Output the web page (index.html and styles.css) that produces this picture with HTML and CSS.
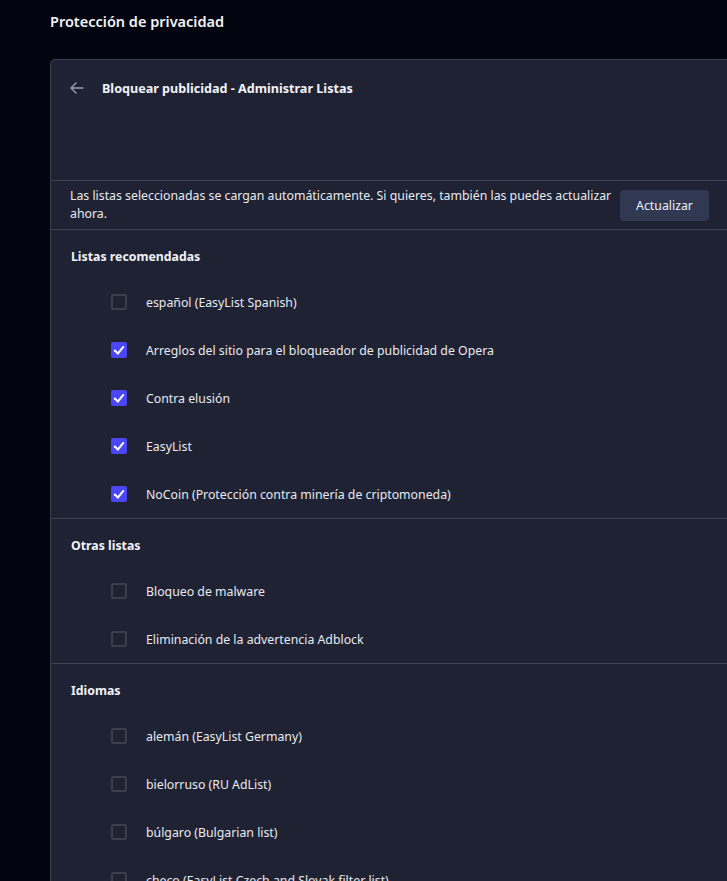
FILE: index.html
```html
<!DOCTYPE html>
<html>
<head>
  <meta name="viewport" content="width=device-width, initial-scale=1.0">
  <link rel="stylesheet" href="styles.css">
</head>
<body>

<h1 class="page_title">Protección de privacidad</h1>

<div class="card">

  <div class="card_header">
    <span class="back_btn">
      <svg width="16" height="16" viewBox="0 0 16 16">
        <path d="M14.5 8H2 M7.5 2.5L2 8l5.5 5.5" fill="none" stroke="currentColor" stroke-width="1.3"/>
      </svg>
    </span>
    <span class="card_title">Bloquear publicidad - Administrar Listas</span>
  </div>

  <div class="info_row">
    <div class="info_text">Las listas seleccionadas se cargan automáticamente. Si quieres, también las puedes actualizar ahora.</div>
    <div class="update_btn">Actualizar</div>
  </div>

  <div class="section">
    <div class="section_title">Listas recomendadas</div>
    <div class="list_row"><span class="check"></span>español (EasyList Spanish)</div>
    <div class="list_row"><span class="check checked"></span>Arreglos del sitio para el bloqueador de publicidad de Opera</div>
    <div class="list_row"><span class="check checked"></span>Contra elusión</div>
    <div class="list_row"><span class="check checked"></span>EasyList</div>
    <div class="list_row"><span class="check checked"></span>NoCoin (Protección contra minería de criptomoneda)</div>
  </div>

  <div class="section">
    <div class="section_title">Otras listas</div>
    <div class="list_row"><span class="check"></span>Bloqueo de malware</div>
    <div class="list_row"><span class="check"></span>Eliminación de la advertencia Adblock</div>
  </div>

  <div class="section">
    <div class="section_title">Idiomas</div>
    <div class="list_row"><span class="check"></span>alemán (EasyList Germany)</div>
    <div class="list_row"><span class="check"></span>bielorruso (RU AdList)</div>
    <div class="list_row"><span class="check"></span>búlgaro (Bulgarian list)</div>
    <div class="list_row"><span class="check"></span>checo (EasyList Czech and Slovak filter list)</div>
  </div>

</div>

</body>
</html>
```

FILE: styles.css
```css
html {
  height: 100%;
}

body {
  margin: 0;
  padding: 0 0 0 50px;
  background-color: #02040f;
  color: #e8eaf0;
  font-family: "Noto Sans", "Open Sans", sans-serif;
  font-size: 12.3px;
  overflow: hidden;
}

.page_title {
  margin: 0;
  padding: 12px 0 0 0;
  height: 47px;
  font-size: 14.5px;
  line-height: 18px;
  font-weight: 600;
  color: #f2f3f7;
}

.card {
  width: 680px;
  background-color: #1f2233;
  border: 1px solid #3b3e4c;
  border-radius: 5px;
}

.card_header {
  display: flex;
  align-items: center;
  height: 56px;
  padding: 0 20px 64px 18px;
  gap: 17px;
}

.back_btn {
  display: flex;
  color: #9a9daa;
}

.card_title {
  font-weight: 700;
  font-size: 12.6px;
  color: #f2f3f7;
}

.info_row {
  display: flex;
  align-items: center;
  gap: 6px;
  height: 48px;
  padding: 0 22px 0 19px;
  border-top: 1px solid #3f4250;
  border-bottom: 1px solid #3f4250;
  line-height: 18px;
}

.info_text {
  flex: 1;
}

.update_btn {
  width: 89px;
  height: 31px;
  line-height: 31px;
  text-align: center;
  border-radius: 4px;
  background-color: #313852;
  color: #eef0f5;
  flex-shrink: 0;
}

.section {
  border-bottom: 1px solid #3f4250;
}

.section_title {
  padding: 18px 0 12px 20px;
  line-height: 18px;
  font-weight: 700;
  color: #f2f3f7;
}

.list_row {
  display: flex;
  align-items: center;
  height: 48px;
  padding-left: 60px;
  gap: 19px;
}

.check {
  box-sizing: border-box;
  width: 16px;
  height: 16px;
  border: 2px solid #3c3f4b;
  border-radius: 2px;
  flex-shrink: 0;
  position: relative;
}

.checked {
  border: none;
  background-color: #4a45f5;
}

/* white tick inside the ticked boxes */
.checked::after {
  content: "";
  position: absolute;
  left: 5px;
  top: 2px;
  width: 4px;
  height: 8px;
  border-right: 2px solid #ffffff;
  border-bottom: 2px solid #ffffff;
  transform: rotate(40deg);
}
```
